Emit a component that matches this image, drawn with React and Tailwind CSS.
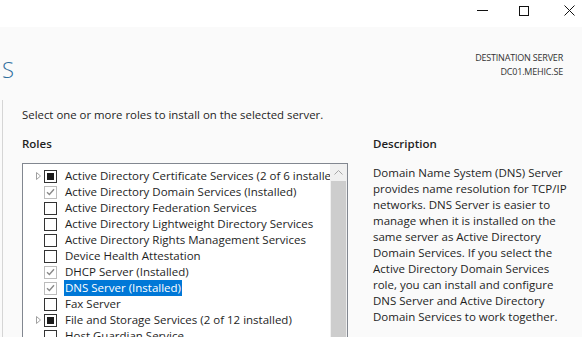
const ROLES = [
  { label: 'Active Directory Certificate Services (2 of 6 installed)', state: 'partial', expand: true },
  { label: 'Active Directory Domain Services (Installed)', state: 'checked' },
  { label: 'Active Directory Federation Services' },
  { label: 'Active Directory Lightweight Directory Services' },
  { label: 'Active Directory Rights Management Services' },
  { label: 'Device Health Attestation' },
  { label: 'DHCP Server (Installed)', state: 'checked' },
  { label: 'DNS Server (Installed)', state: 'checked', selected: true },
  { label: 'Fax Server' },
  { label: 'File and Storage Services (2 of 12 installed)', state: 'partial', expand: true },
  { label: 'Host Guardian Service' },
]

function Checkbox({ state }) {
  if (state === 'checked') {
    return (
      <div className="w-[13px] h-[13px] shrink-0 border border-[#bcbcbc] bg-white flex items-center justify-center">
        <svg width="9" height="8" viewBox="0 0 9 8">
          <path d="M1 4.2 L3.4 6.5 L8 1.2" fill="none" stroke="#8a8a8a" strokeWidth="1.4" />
        </svg>
      </div>
    )
  }
  if (state === 'partial') {
    return (
      <div className="w-[13px] h-[13px] shrink-0 border border-[#333] bg-white flex items-center justify-center">
        <div className="w-[7px] h-[7px] bg-[#1a1a1a]" />
      </div>
    )
  }
  return <div className="w-[13px] h-[13px] shrink-0 border border-[#333] bg-white" />
}

export default function App() {
  return (
    <div className="w-[582px] h-[337px] overflow-hidden bg-[#fafafa] text-[#1e1e1e] flex flex-col" style={{ fontFamily: '"Open Sans", "Noto Sans", sans-serif' }}>
      {/* Title bar */}
      <div className="h-[27px] bg-white flex justify-end items-start shrink-0">
        <div className="w-[20px] h-[21px] mr-[22px] flex items-center justify-center">
          <div className="w-[11px] h-[1px] bg-[#111]" />
        </div>
        <div className="w-[20px] h-[21px] mr-[25px] flex items-center justify-center">
          <div className="w-[10px] h-[10px] border border-[#111]" />
        </div>
        <div className="w-[20px] h-[21px] mr-[3px] flex items-center justify-center">
          <svg width="11" height="11" viewBox="0 0 11 11"><path d="M0.5 0.5 L10.5 10.5 M10.5 0.5 L0.5 10.5" stroke="#111" strokeWidth="1" /></svg>
        </div>
      </div>

      {/* Header */}
      <div className="flex justify-between h-[73px] shrink-0">
        <div className="pl-[2px] pt-[29px] text-[22px] leading-[26px] text-[#2e6e9e] font-light">S</div>
        <div className="pr-[19px] pt-[24px] text-right text-[9px] leading-[14px] text-[#333] tracking-[-0.2px]">
          <div>DESTINATION SERVER</div>
          <div>DC01.MEHIC.SE</div>
        </div>
      </div>

      {/* Body */}
      <div className="flex-1 border-l border-[#d5d5d5] ml-[2px] pl-[19px] pt-[7px] min-h-0">
        <div className="text-[11.4px] leading-[16px]">Select one or more roles to install on the selected server.</div>
        <div className="flex mt-[13px]">
          <div className="w-[326px] shrink-0">
            <div className="text-[11.5px] leading-[16px] font-semibold">Roles</div>
            <div className="mt-[11px] border border-[#828790] bg-white flex h-[200px]">
              <div className="flex-1 min-w-0 pt-[4px] overflow-hidden">
                {ROLES.map(r => (
                  <div key={r.label} className="h-[16px] flex items-center whitespace-nowrap">
                    <div className="w-[21px] shrink-0 flex justify-end pr-[3px]">
                      {r.expand && (
                        <svg width="5" height="8" viewBox="0 0 5 8"><path d="M0.5 0.5 L4.5 4 L0.5 7.5 Z" fill="none" stroke="#a0a0a0" /></svg>
                      )}
                    </div>
                    <Checkbox state={r.state} />
                    <span className={`ml-[7px] px-[1px] text-[11.5px] leading-[16px] ${r.selected ? 'bg-[#0078d7] text-white' : ''}`}>{r.label}</span>
                  </div>
                ))}
              </div>
              <div className="w-[17px] shrink-0 bg-[#f0f0f0] flex flex-col">
                <div className="h-[17px] flex items-center justify-center">
                  <svg width="9" height="5" viewBox="0 0 9 5"><path d="M0.5 4.5 L4.5 0.5 L8.5 4.5" fill="none" stroke="#a6a6a6" /></svg>
                </div>
                <div className="flex-1 mx-[1px] bg-[#cdcdcd]" />
              </div>
            </div>
          </div>
          <div className="ml-[25px] w-[200px]">
            <div className="text-[11.5px] leading-[16px] font-semibold">Description</div>
            <div className="mt-[13px] text-[11.5px] leading-[16px]">
              Domain Name System (DNS) Server provides name resolution for TCP/IP networks. DNS Server is easier to manage when it is installed on the same server as Active Directory Domain Services. If you select the Active Directory Domain Services role, you can install and configure DNS Server and Active Directory Domain Services to work together.
            </div>
          </div>
        </div>
      </div>
    </div>
  )
}
